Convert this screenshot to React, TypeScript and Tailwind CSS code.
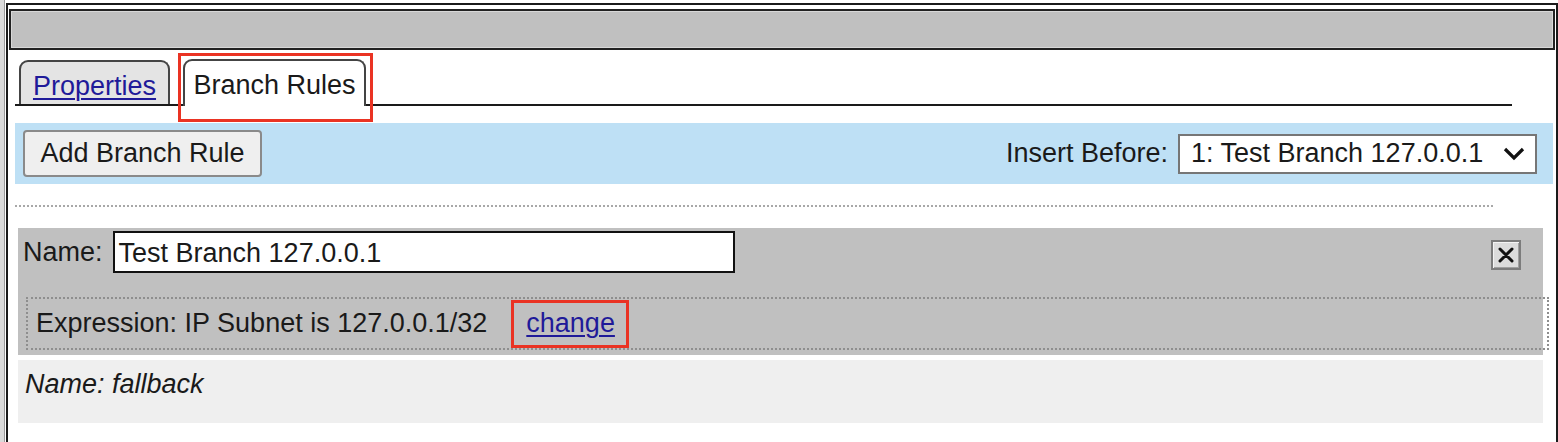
export default function App() {
  return (
    <div className="w-[1558px] h-[442px] bg-white overflow-hidden flex font-['Liberation_Sans',sans-serif] text-[27px] text-[#1a1a1a]">
      {/* edge of the window behind */}
      <div className="w-[5px] h-full bg-[#dadada] border-r border-[#9a9a9a]" />

      <div className="mt-[3px] ml-px w-[1552px] h-[470px] border-2 border-b-0 border-[#1a1a1a] px-px pt-[4px]">
        {/* title bar */}
        <div className="h-[41px] border-2 border-[#222] bg-[#c0c0c0] shadow-[inset_0_0_0_1px_#d8d8d8]" />

        <div className="pl-[6px] pt-[9px]">
          {/* tabs */}
          <div className="flex items-end h-[47px] w-[1497px] border-b-2 border-[#1a1a1a]">
            <div className="ml-[4px] w-[151px] h-[44px] rounded-t-[9px] border-2 border-b-0 border-[#444] bg-[#e4e4e4] flex items-center justify-center pt-[6px]">
              <a href="#" className="text-[#1f1a99] underline underline-offset-[3px] decoration-[1.5px] leading-none">
                Properties
              </a>
            </div>
            <div className="relative ml-[13px] -mb-[2px] w-[183px] h-[47px] rounded-t-[9px] border-2 border-b-0 border-[#444] bg-white flex items-center justify-center pt-[4px]">
              <span className="leading-none">Branch Rules</span>
              <div className="absolute -left-[7px] -top-[8px] w-[195px] h-[69px] border-[3px] border-[#ea3323]" />
            </div>
          </div>

          {/* toolbar */}
          <div className="mt-[17px] h-[61px] w-[1538px] bg-[#bee0f5] flex items-center justify-between pl-[8px] pr-[16px]">
            <button className="w-[239px] h-[47px] rounded-[4px] border-2 border-[#8a8a8a] bg-[#efefef] leading-none">
              Add Branch Rule
            </button>
            <div className="flex items-center gap-[10px]">
              <span className="leading-none">Insert Before:</span>
              <div className="w-[359px] h-[40px] border-2 border-[#767676] bg-white flex items-center justify-between pl-[11px] pr-[10px]">
                <span className="leading-none">1: Test Branch 127.0.0.1</span>
                <svg width="22" height="14" viewBox="0 0 22 14">
                  <polyline points="2,2 11,11 20,2" fill="none" stroke="#111" strokeWidth="3.2" />
                </svg>
              </div>
            </div>
          </div>

          {/* separator */}
          <div className="mt-[21px] w-[1478px] border-t-2 border-dotted border-[#a8a8a8]" />

          {/* rule: test branch */}
          <div className="mt-[21px] ml-[3px] w-[1525px] h-[127px] bg-[#c0c0c0] pt-[3px] pb-[5px] flex flex-col">
            <div className="flex items-start">
              <span className="ml-[5px] mt-[8px] leading-none">Name:</span>
              <div className="ml-[10px] w-[622px] h-[42px] border-2 border-[#111] bg-white flex items-center pl-[4px] pt-[2px]">
                <span className="leading-none">Test Branch 127.0.0.1</span>
              </div>
              <button className="ml-auto mr-[22px] mt-[9px] w-[30px] h-[30px] border-2 border-[#7c7c7c] bg-[#dcdcdc] shadow-[inset_1px_1px_0_#f4f4f4,inset_-1px_-1px_0_#a0a0a0] flex items-center justify-center">
                <svg width="18" height="18" viewBox="0 0 18 18">
                  <path d="M3 3 L15 15 M15 3 L3 15" stroke="#111" strokeWidth="3" strokeLinecap="round" />
                </svg>
              </button>
            </div>
            <div className="mt-[24px] ml-[8px] w-[1523px] h-[53px] border-2 border-dotted border-[#8e8e8e] flex items-center pl-[8px]">
              <span className="leading-none">Expression: IP Subnet is 127.0.0.1/32</span>
              <span className="ml-[24px] h-[48px] border-[3px] border-[#ea3323] flex items-center pl-[12px] pr-[11px]">
                <a href="#" className="text-[#1f1a99] underline underline-offset-[3px] decoration-[1.5px] leading-none">
                  change
                </a>
              </span>
            </div>
          </div>

          {/* rule: fallback */}
          <div className="mt-[5px] ml-[3px] w-[1525px] h-[63px] bg-[#efefef] pl-[7px] pt-[4px]">
            <span className="italic leading-none">Name: fallback</span>
          </div>
        </div>
      </div>
    </div>
  );
}
